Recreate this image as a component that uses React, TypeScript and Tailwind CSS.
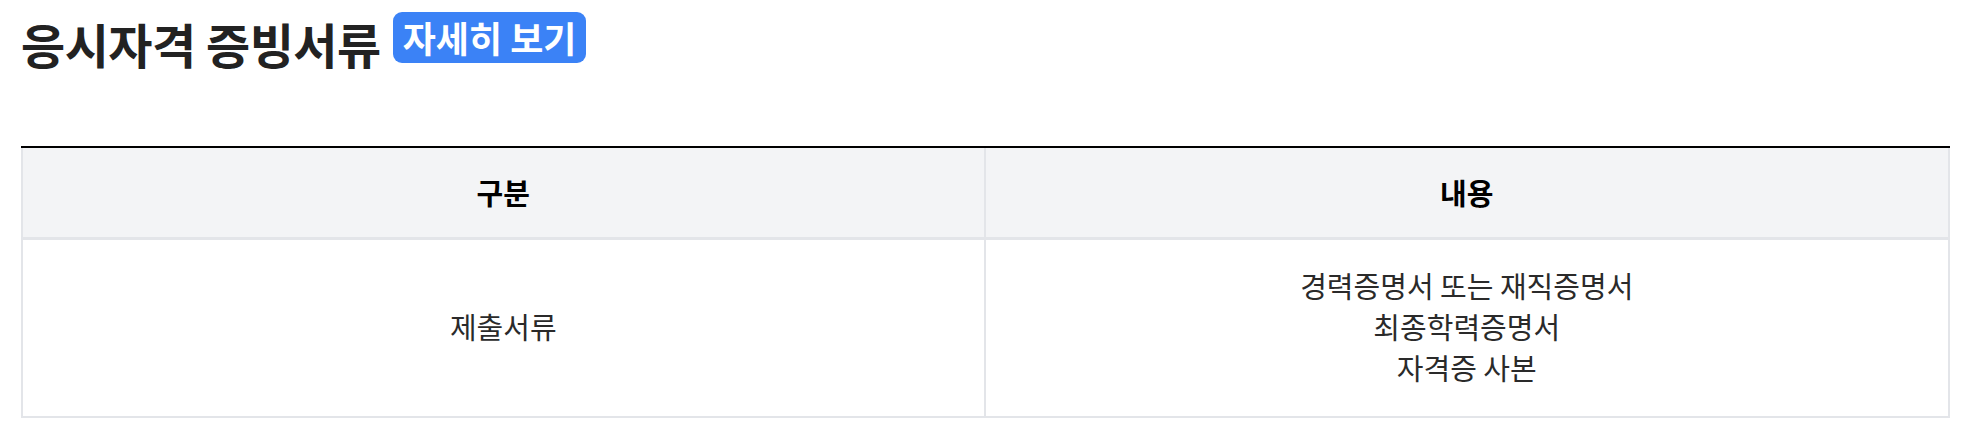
export default function App() {
  return (
    <div className="w-[1978px] h-[442px] bg-white font-['Noto_Sans_CJK_KR','Noto_Sans',sans-serif] text-[#222222]">
      {/* Title */}
      <div className="flex items-start gap-[12px] pl-[21px] pt-[12px]">
        <h2 className="mt-[3px] text-[48px] font-bold leading-[56px] tracking-[-0.5px]">응시자격 증빙서류</h2>
        <span className="flex h-[51px] items-center rounded-[9px] bg-[#3b82f6] px-[10px] pb-[2px] text-[36px] font-bold leading-none text-white">
          자세히 보기
        </span>
      </div>

      {/* Table */}
      <div className="ml-[21px] mt-[75px] w-[1929px] border-t-2 border-black">
        <div className="grid grid-cols-2 border-x-2 border-[#e3e5e9] bg-[#f3f4f6] border-b-[3px]">
          <div className="flex h-[89px] items-center justify-center border-r-2 border-[#e3e5e9] text-[29px] font-bold text-black">
            구분
          </div>
          <div className="flex h-[89px] items-center justify-center text-[29px] font-bold text-black">
            내용
          </div>
        </div>
        <div className="grid grid-cols-2 border-x-2 border-b-2 border-[#e3e5e9] text-[29px] leading-[41px] text-[#2a2a2a]">
          <div className="flex h-[176px] items-center justify-center border-r-2 border-[#e3e5e9] pb-[4px]">제출서류</div>
          <div className="flex h-[176px] flex-col items-center justify-center pb-[4px]">
            <span>경력증명서 또는 재직증명서</span>
            <span>최종학력증명서</span>
            <span>자격증 사본</span>
          </div>
        </div>
      </div>
    </div>
  );
}
